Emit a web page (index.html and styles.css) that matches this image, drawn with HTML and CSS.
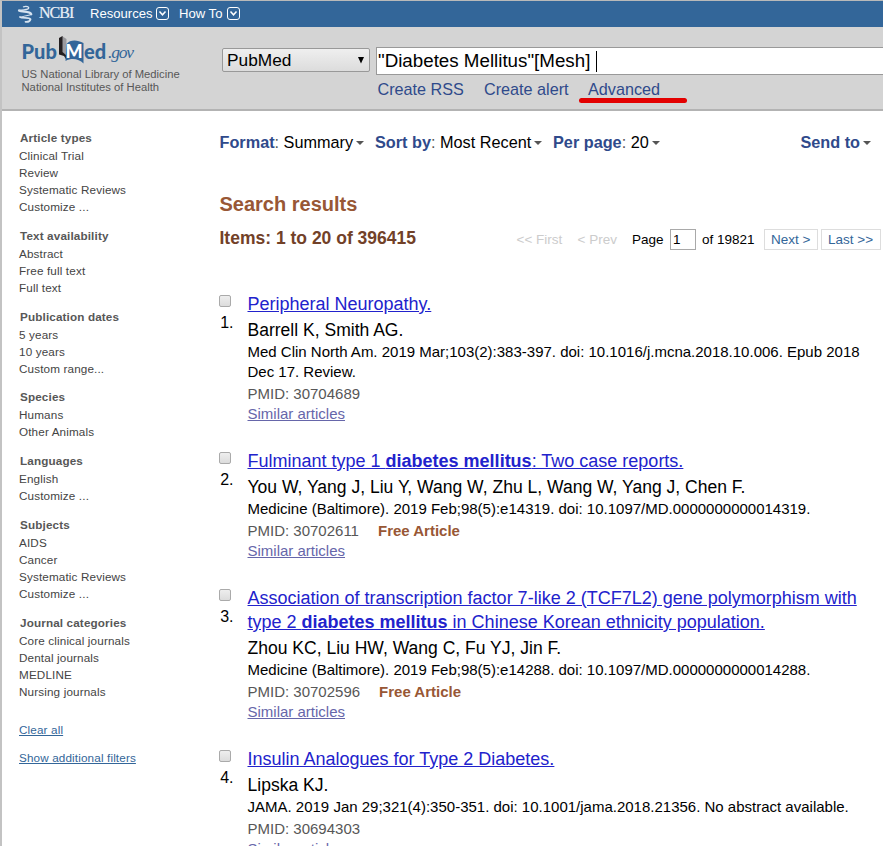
FILE: index.html
```html
<!DOCTYPE html>
<html lang="en">
<head>
<meta charset="utf-8">
<title>"Diabetes Mellitus"[Mesh] - PubMed - NCBI</title>
<link rel="stylesheet" href="styles.css">
</head>
<body>
<div class="page">
  <nav class="topbar">
    <svg class="helix" width="17" height="18" viewBox="0 0 17 18" fill="none" stroke="#d6e3f0" stroke-linecap="round">
      <path d="M2 5.500C5 7.500 13 5.500 14.300 9.300" stroke-width="2.200"/>
      <path d="M6.500 1.800C9.500 1 12.500 1.800 11.500 3.500C10.500 4.800 6 5 2 5.500" stroke-width="1.300"/>
      <path d="M14.300 9.300C12.500 11 5.500 10.500 4 12.500" stroke-width="1.200"/>
      <path d="M3 12C5.500 13.800 12 12 13.500 14.200C13 16.200 10.500 17 8.500 16.800" stroke-width="1.800"/>
    </svg>
    <span class="ncbi">NCBI</span>
    <a class="menu resources">Resources</a>
    <svg class="chev" width="13" height="13" viewBox="0 0 13 13" fill="none" stroke="#fff"><rect x=".5" y=".5" width="12" height="12" rx="2.500"/><path d="M3.500 4.500L6.500 7.800L9.500 4.500" stroke-width="1.500"/></svg>
    <a class="menu howto">How To</a>
    <svg class="chev" width="13" height="13" viewBox="0 0 13 13" fill="none" stroke="#fff"><rect x=".5" y=".5" width="12" height="12" rx="2.500"/><path d="M3.500 4.500L6.500 7.800L9.500 4.500" stroke-width="1.500"/></svg>
  </nav>
  <header class="header">
    <div class="brand">
      <div class="logo">
        <span class="pub">Pub</span>
        <span class="book">
          <svg width="28" height="29" viewBox="0 0 28 29">
            <path d="M4 1L8.500 4V22L4 18Z" fill="#9a9a9e"/>
            <path d="M1 3L4.500 1V17L9 21L8.500 25L6 21L1 19.500Z" fill="#231f20"/>
            <path d="M8.500 9C12 4.500 19 4.500 25.500 8V28.500C21 24 14 22.500 7.500 26Z" fill="#336699"/>
          </svg>
          <span class="m">M</span>
        </span>
        <span class="ed">ed</span><span class="gov">.gov</span>
      </div>
      <div class="org o1">US National Library of Medicine</div>
      <div class="org o2">National Institutes of Health</div>
    </div>
    <div class="select"><span>PubMed</span><svg width="6" height="7" viewBox="0 0 6 7"><path d="M0 0H6L3 6.500Z"/></svg></div>
    <div class="search">
      <div class="input"><span class="query">"Diabetes Mellitus"[Mesh]</span><i class="caret"></i></div>
      <div class="links"><a class="rss">Create RSS</a><a class="alert">Create alert</a><a class="adv">Advanced</a></div>
    </div>
  </header>
  <div class="body">
    <aside class="filters">
      <section><h3>Article types</h3><a>Clinical Trial</a><a>Review</a><a>Systematic Reviews</a><a>Customize ...</a></section>
      <section><h3>Text availability</h3><a>Abstract</a><a>Free full text</a><a>Full text</a></section>
      <section class="dates"><h3>Publication dates</h3><a>5 years</a><a>10 years</a><a>Custom range...</a></section>
      <section><h3>Species</h3><a>Humans</a><a>Other Animals</a></section>
      <section><h3>Languages</h3><a>English</a><a>Customize ...</a></section>
      <section><h3>Subjects</h3><a>AIDS</a><a>Cancer</a><a>Systematic Reviews</a><a>Customize ...</a></section>
      <section><h3>Journal categories</h3><a>Core clinical journals</a><a>Dental journals</a><a>MEDLINE</a><a>Nursing journals</a></section>
      <p class="clear"><a>Clear all</a></p>
      <p class="more"><a>Show additional filters</a></p>
    </aside>
    <main class="main">
      <div class="display">
        <span class="d-format"><b>Format</b><i>:</i> Summary<u></u></span>
        <span class="d-sort"><b>Sort by</b><i>:</i> Most Recent<u></u></span>
        <span class="d-per"><b>Per page</b><i>:</i> 20<u></u></span>
        <span class="d-send"><b>Send to</b><u></u></span>
      </div>
      <h2>Search results</h2>
      <div class="count-row">
        <h3 class="count">Items: 1 to 20 of 396415</h3>
        <div class="pager">
          <span class="off first">&lt;&lt; First</span><span class="off prev">&lt; Prev</span>
          <span class="lbl">Page</span><span class="num">1</span><span class="total">of 19821</span>
          <a class="btn next">Next &gt;</a><a class="btn last">Last &gt;&gt;</a>
        </div>
      </div>
      <article class="item">
        <div class="pick"><i class="box"></i><span>1.</span></div>
        <div class="rec">
          <p class="title"><a>Peripheral Neuropathy.</a></p>
          <p class="authors">Barrell K, Smith AG.</p>
          <p class="details">Med Clin North Am. 2019 Mar;103(2):383-397. doi: 10.1016/j.mcna.2018.10.006. Epub 2018<br>Dec 17. Review.</p>
          <p class="pmid"><span>PMID: 30704689</span></p>
          <p class="similar"><a>Similar articles</a></p>
        </div>
      </article>
      <article class="item">
        <div class="pick"><i class="box"></i><span>2.</span></div>
        <div class="rec">
          <p class="title"><a>Fulminant type 1 <b>diabetes mellitus</b>: Two case reports.</a></p>
          <p class="authors">You W, Yang J, Liu Y, Wang W, Zhu L, Wang W, Yang J, Chen F.</p>
          <p class="details">Medicine (Baltimore). 2019 Feb;98(5):e14319. doi: 10.1097/MD.0000000000014319.</p>
          <p class="pmid"><span>PMID: 30702611</span><b>Free Article</b></p>
          <p class="similar"><a>Similar articles</a></p>
        </div>
      </article>
      <article class="item">
        <div class="pick"><i class="box"></i><span>3.</span></div>
        <div class="rec">
          <p class="title"><a>Association of transcription factor 7-like 2 (TCF7L2) gene polymorphism with<br>type 2 <b>diabetes mellitus</b> in Chinese Korean ethnicity population.</a></p>
          <p class="authors">Zhou KC, Liu HW, Wang C, Fu YJ, Jin F.</p>
          <p class="details">Medicine (Baltimore). 2019 Feb;98(5):e14288. doi: 10.1097/MD.0000000000014288.</p>
          <p class="pmid"><span>PMID: 30702596</span><b>Free Article</b></p>
          <p class="similar"><a>Similar articles</a></p>
        </div>
      </article>
      <article class="item">
        <div class="pick"><i class="box"></i><span>4.</span></div>
        <div class="rec">
          <p class="title"><a>Insulin Analogues for Type 2 Diabetes.</a></p>
          <p class="authors">Lipska KJ.</p>
          <p class="details">JAMA. 2019 Jan 29;321(4):350-351. doi: 10.1001/jama.2018.21356. No abstract available.</p>
          <p class="pmid"><span>PMID: 30694303</span></p>
          <p class="similar"><a>Similar articles</a></p>
        </div>
      </article>
    </main>
  </div>
</div>
</body>
</html>
```
FILE: styles.css
```css
* { box-sizing: border-box; }
html, body { margin: 0; height: 846px; overflow: hidden; }
body { font-family: "Liberation Sans", Arial, sans-serif; background: #fff; color: #000; }
h2, h3, p { margin: 0; }
a { text-decoration: none; white-space: nowrap; }
.page { height: 846px; border-left: 2px solid #c3c3c3; border-top: 1px solid #b9b9b9; overflow: hidden; white-space: nowrap; }

.topbar { height: 26px; background: #336699; display: flex; align-items: center; color: #fff; padding-left: 15px; }
.topbar svg { margin-bottom: 1px; }
.helix { flex: none; }
.ncbi { font: 16px/24px "Liberation Serif", serif; height: 26px; margin-left: 5px; width: 51px; color: #e9eff6; letter-spacing: -1px; -webkit-text-stroke: .2px #e9eff6; }
.menu { font-size: 13.1px; line-height: 28px; }
.resources { width: 66px; }
.howto { margin-left: 10px; width: 48px; }
.chev { flex: none; }

.header { height: 84px; background: #d4d4d4; border-bottom: 2px solid #b3b3b3; display: flex; }
.brand { width: 220px; padding: 8px 0 0 19.5px; }
.logo { height: 30px; display: flex; color: #336699; }
.pub, .ed { font: 900 20px/32px Lato, sans-serif; }
.pub { width: 36px; letter-spacing: .1px; }
.ed { width: 24px; }
.book { position: relative; width: 26.5px; }
.book svg { display: block; }
.m { position: absolute; left: 8px; top: 0; color: #fff; font: 900 18px/32px Lato, sans-serif; }
.gov { font: italic 17.5px/34px "Liberation Serif", serif; letter-spacing: -1.2px; }
.org { font-size: 11.25px; line-height: 13px; color: #575757; }
.o1 { margin-top: 3px; }
.select { width: 148px; height: 24px; margin-top: 21px; border: 1px solid #999; border-radius: 2px; background: linear-gradient(#efefef, #dcdcdc); display: flex; align-items: center; justify-content: space-between; padding: 0 5px 0 4px; font-size: 17.3px; }
.search { margin: 20px 0 0 6px; flex: 1; }
.input { height: 28px; border: 1px solid #999; border-right: 0; background: #fff; display: flex; align-items: center; padding-left: 1px; font-size: 18.75px; }
.caret { width: 1px; height: 21px; background: #000; margin-left: 6px; }
.links { display: flex; font-size: 16.2px; line-height: 20px; padding: 4px 0 0 1.5px; color: #2f4a8b; }
.rss { width: 106.5px; }
.alert { width: 104px; }
.adv { position: relative; }
.adv::after { content: ""; position: absolute; left: -9px; top: 19px; width: 108px; height: 5px; border-radius: 3px; background: #e30000; }

.body { display: flex; }
.filters { width: 200px; padding: 17px 0 0 17px; font-size: 11.7px; letter-spacing: .14px; color: #444; }
.filters section { margin-bottom: 11px; }
.filters section.dates { margin-bottom: 10px; }
.filters h3 { font-size: 11.7px; line-height: 19px; padding-left: 1px; color: #575757; }
.filters section a { display: block; line-height: 17px; }
.clear, .more { line-height: 17px; }
.clear { margin-top: 21px; }
.more { margin-top: 11px; }
.clear a, .more a { text-decoration: underline; color: #336699; }

.main { width: 681px; padding: 21px 0 0 17.5px; flex: none; }
.display { display: flex; font-size: 16.25px; line-height: 20px; }
.display b { color: #2f4a8b; }
.display i { font-style: normal; color: #575757; }
.display u { display: inline-block; border: 4px solid transparent; border-top-color: #555; border-bottom: 0; margin: 0 0 3px 3px; }
.d-format { width: 155.5px; }
.d-sort { width: 178px; }
.d-send { margin-left: auto; padding-right: 12px; }
h2 { font-size: 20px; line-height: 24px; margin-top: 40px; color: #985735; }
.count-row { display: flex; justify-content: space-between; margin-top: 11px; height: 23px; }
.count { font-size: 17.5px; line-height: 22px; color: #724128; }
.pager { display: flex; font-size: 13.5px; line-height: 22px; margin: 2px 2px 0 0; height: 21px; }
.off { color: #ccc; }
.first { width: 61px; }
.prev { width: 54.5px; }
.lbl { width: 38px; }
.num { width: 26px; height: 21px; border: 1px solid #a9a9a9; padding-left: 2px; line-height: 20px; }
.total { padding-left: 6px; width: 68px; }
.btn { border: 1px solid #ddd; height: 21px; line-height: 20px; color: #336699; padding-left: 6px; }
.next { width: 54px; margin-right: 3px; }
.last { width: 60px; }

.item { display: flex; margin-bottom: 25px; }
.count-row + .item { margin-top: 42px; }
.pick { width: 28px; flex: none; padding-top: 3px; font-size: 16px; }
.box { display: block; width: 12px; height: 12px; margin-left: -.5px; border: 1px solid #aaa; border-radius: 2px; background: linear-gradient(#eee, #dcdcdc); }
.pick span { display: block; line-height: 20px; margin-top: 6px; width: 14px; text-align: right; }
.title { font-size: 18px; line-height: 24px; color: #2222cc; }
.title a { text-decoration: underline; }
.authors { font-size: 17.55px; line-height: 24px; margin-top: 2px; }
.details { font-size: 15px; line-height: 20px; }
.pmid { font-size: 15px; line-height: 20px; margin-top: 2px; color: #575757; }
.pmid b { color: #985735; margin-left: 19px; }
.similar { font-size: 15px; line-height: 20px; color: #6666aa; }
.similar a { text-decoration: underline; }
```
